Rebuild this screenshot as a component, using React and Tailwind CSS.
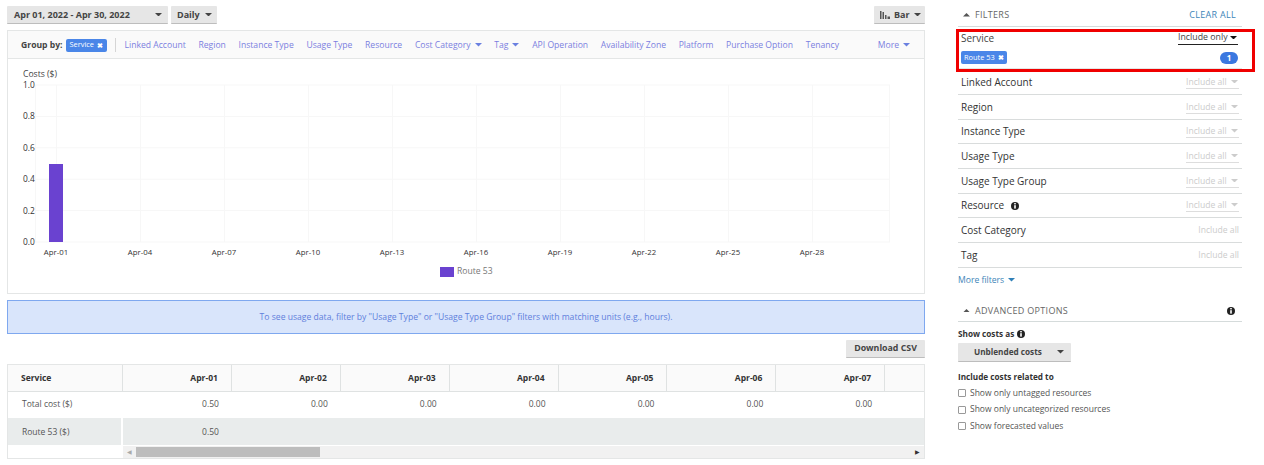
import React from 'react';

const links = [
  { label: 'Linked Account' },
  { label: 'Region' },
  { label: 'Instance Type' },
  { label: 'Usage Type' },
  { label: 'Resource' },
  { label: 'Cost Category', caret: true },
  { label: 'Tag', caret: true },
  { label: 'API Operation' },
  { label: 'Availability Zone' },
  { label: 'Platform' },
  { label: 'Purchase Option' },
  { label: 'Tenancy' },
];

const filters = [
  { label: 'Linked Account', h: 'h-[25px]' },
  { label: 'Region', h: 'h-[25px]' },
  { label: 'Instance Type', h: 'h-[24px]' },
  { label: 'Usage Type', h: 'h-[25px]' },
  { label: 'Usage Type Group', h: 'h-[25px]' },
  { label: 'Resource', info: true, h: 'h-[24px]' },
  { label: 'Cost Category', plain: true, h: 'h-[25px]' },
  { label: 'Tag', plain: true, h: 'h-[25px]' },
];

const days = ['Apr-01', 'Apr-02', 'Apr-03', 'Apr-04', 'Apr-05', 'Apr-06', 'Apr-07'];
const ticks = ['Apr-01', 'Apr-04', 'Apr-07', 'Apr-10', 'Apr-13', 'Apr-16', 'Apr-19', 'Apr-22', 'Apr-25', 'Apr-28'];
const yTicks = ['1.0', '0.8', '0.6', '0.4', '0.2', '0.0'];

function Caret({ className = 'text-[#444]', up }) {
  return (
    <svg width="7" height="3.5" viewBox="0 0 8 4" className={`inline-block shrink-0 ${className}`}>
      <path d={up ? 'M0 4 L4 0 L8 4 Z' : 'M0 0 L8 0 L4 4 Z'} fill="currentColor" />
    </svg>
  );
}

function InfoIcon() {
  return (
    <svg width="8" height="8" viewBox="0 0 8 8" className="inline-block shrink-0">
      <circle cx="4" cy="4" r="4" fill="#222" />
      <rect x="3.2" y="1" width="1.6" height="1.4" fill="#fff" />
      <rect x="3.2" y="3.2" width="1.6" height="3.4" fill="#fff" />
    </svg>
  );
}

function GrayButton({ children, className = '' }) {
  return (
    <div className={`flex items-center whitespace-nowrap bg-[#e6e6e6] border-b border-[#bdbdbd] rounded-[1px] font-bold text-[#444] ${className}`}>
      {children}
    </div>
  );
}

function Tag({ label, className = '' }) {
  return (
    <span className={`flex items-center justify-between whitespace-nowrap bg-[#4a86e8] rounded-[2px] text-white text-[7.4px] leading-none ${className}`}>
      {label}
      <span className="text-[7px] font-bold">✖</span>
    </span>
  );
}

function Chart() {
  const xs = ticks.map((_, i) => 56 + i * 84);
  const ys = yTicks.map((_, i) => 84 + i * 31.4);
  return (
    <svg width="916" height="235" viewBox="8 58 916 235" className="block" fontFamily="'Open Sans', sans-serif">
      <text x="23" y="76" fontSize="8.6" fill="#444">Costs ($)</text>
      {ys.map((y) => (
        <line key={y} x1="35" x2="890" y1={y} y2={y} stroke="#f7f7f7" />
      ))}
      <line x1="35.5" x2="35.5" y1="84" y2="241" stroke="#f7f7f7" />
      <line x1="889.5" x2="889.5" y1="84" y2="241" stroke="#f7f7f7" />
      {xs.map((x) => (
        <line key={x} x1={x + 0.5} x2={x + 0.5} y1="84" y2="241" stroke="#f7f7f7" />
      ))}
      {yTicks.map((t, i) => (
        <text key={t} x="23" y={ys[i] + 3} fontSize="8.4" fill="#333">{t}</text>
      ))}
      {ticks.map((t, i) => (
        <text key={t} x={xs[i]} y="254" fontSize="7.8" fill="#333" textAnchor="middle">{t}</text>
      ))}
      <rect x="49" y="163" width="14" height="78" fill="#6a42d0" />
      <rect x="440" y="266" width="14" height="10" fill="#6a42d0" />
      <text x="457" y="273" fontSize="8.6" fill="#777">Route 53</text>
    </svg>
  );
}

function CostTable() {
  const grid = 'grid grid-cols-[115px_repeat(7,108.9px)_1fr]';
  return (
    <div className="mt-[6px] border border-[#e4e6e6] h-[95px] flex flex-col text-[8.5px] text-[#555]">
      <div className={`${grid} h-[27px] bg-[#fafafa] border-b border-[#dfe2e2] font-bold text-[#333]`}>
        <div className="flex items-center pl-[13px] border-r border-[#dfe2e2]">Service</div>
        {days.map((d) => (
          <div key={d} className="flex items-center justify-end pr-[13px] border-r border-[#dfe2e2]">{d}</div>
        ))}
        <div />
      </div>
      <div className={`${grid} h-[26px]`}>
        <div className="flex items-center pl-[14px] pb-[1px]">Total cost ($)</div>
        {days.map((d, i) => (
          <div key={d} className="flex items-center justify-end pr-[13px] pb-[1px]">{i === 0 ? '0.50' : '0.00'}</div>
        ))}
        <div />
      </div>
      <div className={`${grid} h-[27px] bg-[#e9ecec]`}>
        <div className="flex items-center pl-[14px] pt-[1px] border-r-2 border-white">Route 53 ($)</div>
        <div className="flex items-center justify-end pr-[13px] pt-[1px]">0.50</div>
      </div>
      <div className="flex flex-1 pt-[1px]">
        <div className="w-[115px]" />
        <div className="flex-1 flex items-center bg-[#f1f1f1] h-[12px]">
          <span className="w-[13px] text-center text-[6px] text-[#aaa]">◀</span>
          <div className="w-[184px] h-[10px] bg-[#bdbdbd]" />
          <span className="ml-auto w-[13px] text-center text-[6px] text-[#333]">▶</span>
        </div>
      </div>
    </div>
  );
}

function FilterPanel() {
  return (
    <div className="relative w-[284px] ml-[33px] text-[#333]">
      <div className="flex items-center h-[27px] border-b border-[#d5dbdb] pl-[5px] pr-[6px] pt-[4px] text-[9px] tracking-[0.3px]">
        <Caret up className="text-[#555]" />
        <span className="ml-[5px] text-[#666]">FILTERS</span>
        <span className="ml-auto text-[#3d85b8]">CLEAR ALL</span>
      </div>

      <div className="h-[43px] border-b-2 border-[#e4e6e6] pl-[3px] pr-[4px] pt-[4px]">
        <div className="flex items-center justify-between h-[14px] text-[10px]">
          <span className="text-[#444]">Service</span>
          <span className="flex items-center justify-between w-[60px] border-b border-[#222] leading-[13px] whitespace-nowrap text-[8.8px] text-[#444]">
            Include only
            <Caret className="text-[#111] mr-[1px]" />
          </span>
        </div>
        <div className="flex items-center justify-between mt-[6px]">
          <Tag label="Route 53" className="w-[46px] h-[13px] px-[3px]" />
          <span className="flex items-center justify-center w-[18px] h-[12px] rounded-full bg-[#3b78e0] text-white text-[8px] font-bold">1</span>
        </div>
      </div>

      {filters.map((f) => (
        <div key={f.label} className={`flex items-center justify-between ${f.h} border-b border-[#d9dcdc] pl-[3px] pr-[3px] text-[10px]`}>
          <span className="flex items-center gap-[7px]">
            {f.label}
            {f.info && <InfoIcon />}
          </span>
          {f.plain ? (
            <span className="text-[8.6px] text-[#ccc]">Include all</span>
          ) : (
            <span className="flex items-center justify-between w-[53px] border-b border-[#ddd] leading-[12px] text-[8.6px] text-[#ccc]">
              Include all
              <Caret className="text-[#ccc] mr-[1px]" />
            </span>
          )}
        </div>
      ))}

      <div className="flex items-center gap-[4px] h-[24px] text-[8.6px] text-[#3d85b8]">
        More filters
        <Caret className="text-[#2f80b8]" />
      </div>

      <div className="flex items-center h-[21px] mt-[9px] border-b border-[#d5dbdb] pl-[5px] pr-[7px] pb-[1px] text-[9px] tracking-[0.3px]">
        <Caret up className="text-[#555]" />
        <span className="ml-[5px] text-[#666]">ADVANCED OPTIONS</span>
        <span className="ml-auto"><InfoIcon /></span>
      </div>

      <div className="flex items-center gap-[3px] mt-[6px] text-[8.2px] leading-[12px] font-bold text-[#333]">
        Show costs as
        <InfoIcon />
      </div>
      <GrayButton className="w-[113px] h-[19px] mt-[3px] pl-[16px] pr-[7px] justify-between text-[8.2px]">
        Unblended costs
        <Caret />
      </GrayButton>
      <div className="mt-[9px] text-[8.2px] leading-[12px] font-bold text-[#333]">Include costs related to</div>
      <div className="mt-[2px]">
        {['Show only untagged resources', 'Show only uncategorized resources', 'Show forecasted values'].map((t) => (
          <div key={t} className="flex items-center gap-[4px] h-[16.5px] text-[8.5px] text-[#555]">
            <span className="w-[8px] h-[8px] border border-[#999] rounded-[1px] shrink-0" />
            {t}
          </div>
        ))}
      </div>

      {/* red highlight drawn over the Service filter */}
      <div className="absolute left-[-2px] top-[29px] w-[299px] h-[43px] border-[3px] border-[#f00000] pointer-events-none" />
    </div>
  );
}

export default function App() {
  return (
    <div className="flex w-[1264px] h-[465px] overflow-hidden bg-white font-['Open_Sans',sans-serif]">
      <div className="w-[918px] ml-[7px] pt-[6px]">
        <div className="flex items-start gap-[3px] h-[18px] text-[9px]">
          <GrayButton className="w-[161px] h-[18px] pl-[7px] pr-[6px] justify-between">
            Apr 01, 2022 - Apr 30, 2022
            <Caret />
          </GrayButton>
          <GrayButton className="w-[46px] h-[18px] pl-[6px] gap-[5px]">
            Daily
            <Caret />
          </GrayButton>
          <GrayButton className="w-[51px] h-[18px] ml-auto pl-[6px] gap-[4px]">
            <svg width="10" height="8" viewBox="0 0 10 8">
              <path d="M0 0h1.5v8H0zM2.5 1h1.5v7H2.5zM5 4h1.5v4H5zM7.5 5.5H10V8H7.5z" fill="#555" />
            </svg>
            Bar
            <Caret />
          </GrayButton>
        </div>

        <div className="mt-[6px] h-[264px] border border-[#e4e6e6]">
          <div className="flex items-center h-[28px] bg-[#fafafa] border-b border-[#e4e6e6] pl-[13px] pr-[14px] pt-[1px] text-[8.6px]">
            <span className="font-bold text-[#444] whitespace-nowrap">Group by:</span>
            <Tag label="Service" className="w-[41px] h-[13px] ml-[3px] px-[4px] shrink-0" />
            <span className="w-px h-[14px] bg-[#d5d5d5] ml-[8px] mr-[9px]" />
            <div className="flex items-center gap-[12.7px] text-[#7b7fe0]">
              {links.map((l) => (
                <span key={l.label} className="flex items-center gap-[4px] whitespace-nowrap">
                  {l.label}
                  {l.caret && <Caret className="text-[#6a80e0]" />}
                </span>
              ))}
            </div>
            <span className="flex items-center gap-[4px] ml-auto text-[#7b7fe0]">
              More
              <Caret className="text-[#6a80e0]" />
            </span>
          </div>
          <Chart />
        </div>

        <div className="flex items-center justify-center h-[34px] mt-[6px] bg-[#d9e5fb] border border-[#7fa8ef] text-[8.6px] text-[#5f7fdc]">
          To see usage data, filter by "Usage Type" or "Usage Type Group" filters with matching units (e.g., hours).
        </div>

        <div className="flex justify-end mt-[6px]">
          <GrayButton className="w-[79px] h-[18px] justify-center text-[8.8px]">Download CSV</GrayButton>
        </div>

        <CostTable />
      </div>

      <FilterPanel />
    </div>
  );
}
